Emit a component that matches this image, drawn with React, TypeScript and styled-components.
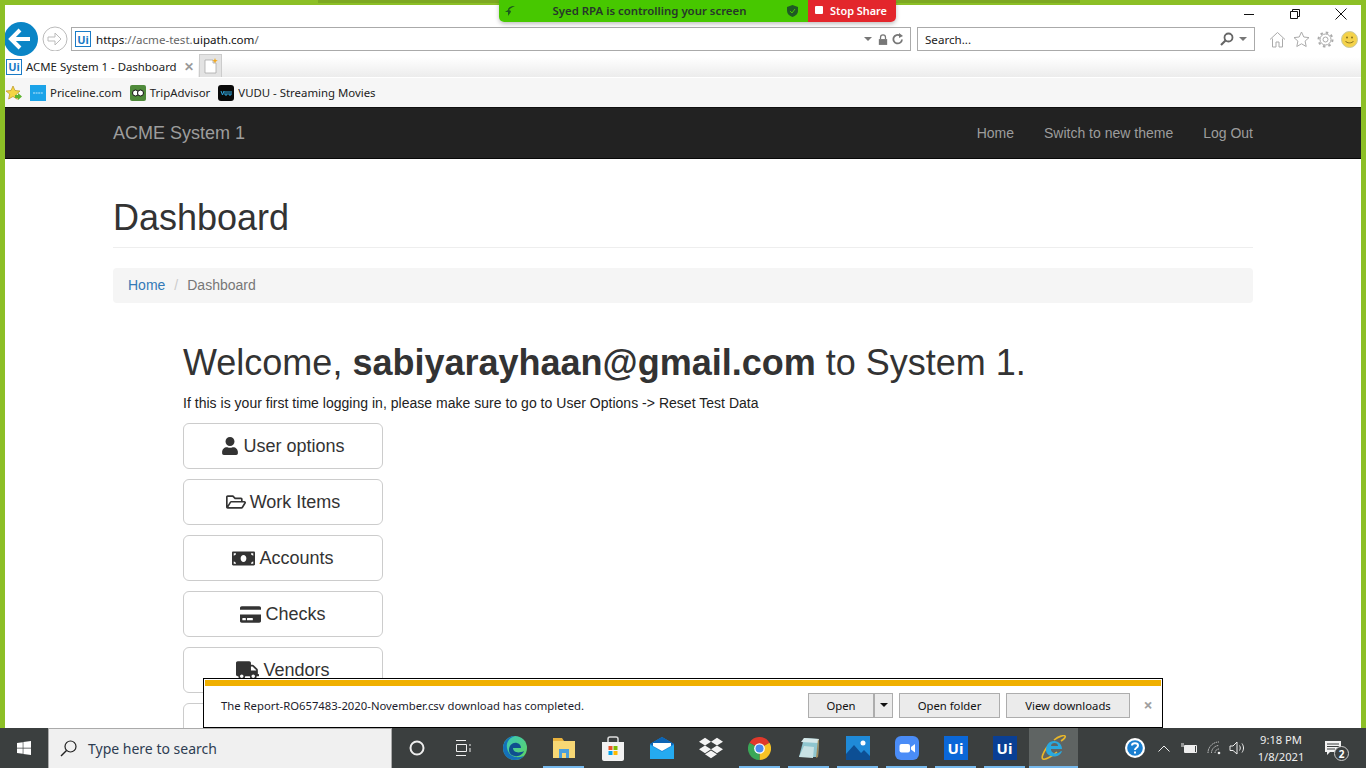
import styled, { createGlobalStyle } from "styled-components";
import {
  FaUser,
  FaRegFolderOpen,
  FaMoneyBill,
  FaCreditCard,
  FaTruck,
  FaDropbox,
  FaWindows,
} from "react-icons/fa";

const GlobalStyle = createGlobalStyle`
  html, body {
    margin: 0;
    padding: 0;
    height: 100%;
    overflow: hidden;
    background: #fff;
  }
  * {
    box-sizing: border-box;
  }
`;

const chromeFont = `"Noto Sans", "Open Sans", sans-serif`;
const pageFont = `"Liberation Sans", Arial, sans-serif`;

const Desktop = styled.div`
  position: relative;
  width: 1366px;
  height: 768px;
  display: flex;
  flex-direction: column;
  overflow: hidden;
  font-family: ${pageFont};
`;

const BrowserWindow = styled.div`
  flex: 1;
  min-height: 0;
  display: flex;
  flex-direction: column;
  overflow: hidden;
  border: 5px solid #8cbf26;
  border-bottom: 0;
  background: #fff;
`;

/* zoom share banner */
const ShareGlow = styled.div`
  position: absolute;
  top: 0;
  left: 318px;
  width: 762px;
  height: 3px;
  background: #7da822;
`;

const ShareBanner = styled.div`
  position: absolute;
  top: 0;
  left: 499px;
  width: 397px;
  height: 22px;
  display: flex;
  border-radius: 0 0 5px 5px;
  overflow: hidden;
  box-shadow: 0 2px 4px rgba(0, 0, 0, 0.25);
  font-family: ${chromeFont};
  font-size: 11.4px;
  font-weight: 600;
`;

const ShareInfo = styled.div`
  width: 309px;
  display: flex;
  align-items: center;
  justify-content: space-between;
  padding: 0 10px 1px 6px;
  background: #47c800;
  color: #26372a;
`;

const ShareLabel = styled.span`
  margin-right: 3px;
`;

const StopShare = styled.div`
  flex: 1;
  display: flex;
  align-items: center;
  gap: 7px;
  padding: 0 0 2px 7px;
  background: #e3262c;
  color: #fff;
  font-size: 10.9px;
`;

const StopMark = styled.span`
  width: 8px;
  height: 8px;
  border-radius: 1px;
  background: #fff;
`;

/* browser chrome */
const TitleRow = styled.div`
  height: 22px;
  flex: none;
  display: flex;
  justify-content: flex-end;
  align-items: center;
  padding: 0 14px 4px 0;
  gap: 34px;
`;

const WindowButton = styled.svg`
  width: 12px;
  height: 12px;
  display: block;
  fill: none;
  stroke: #111;
  stroke-width: 1;
`;

const NavRow = styled.div`
  height: 24px;
  flex: none;
  display: flex;
  align-items: center;
`;

const BackCircle = styled.svg`
  width: 33px;
  height: 34px;
  margin: 0 4px 0 0;
  flex: none;
  position: relative;
  z-index: 1;
`;

const ForwardCircle = styled.svg`
  width: 26px;
  height: 26px;
  margin-right: 3px;
  flex: none;
`;

const AddressBox = styled.div<{ $wide?: boolean }>`
  height: 24px;
  width: ${p => (p.$wide ? 840 : 338)}px;
  margin-right: 6px;
  display: flex;
  align-items: center;
  padding: 0 6px 0 3px;
  gap: 4px;
  flex: none;
  border: 1px solid #aaa;
  background: #fff;
  font-family: ${chromeFont};
  font-size: 11.6px;
  color: #222;
`;

const UiBadge = styled.span<{ $size?: number }>`
  width: ${p => p.$size ?? 16}px;
  height: ${p => p.$size ?? 16}px;
  flex: none;
  display: flex;
  align-items: center;
  justify-content: center;
  border: 1.5px solid #1a7bc6;
  background: #fff;
  color: #1a7bc6;
  font-family: ${chromeFont};
  font-size: 11px;
  font-weight: 700;
  line-height: 1;
`;

const Url = styled.span`
  flex: 1;
  margin-left: 1px;
  white-space: nowrap;
  color: #666;
  & b {
    font-weight: 400;
    color: #111;
  }
`;

const SearchLabel = styled.span`
  flex: 1;
  margin-left: 4px;
`;

const SmallGlyph = styled.svg`
  flex: none;
  display: block;
`;

const ToolIcons = styled.div`
  flex: 1;
  display: flex;
  align-items: center;
  gap: 7px;
  padding-left: 8px;
`;

const TabRow = styled.div`
  height: 26px;
  flex: none;
  display: flex;
  align-items: flex-end;
  background: linear-gradient(#fff 0, #fff 6px, #ececec 100%);
`;

const Tab = styled.div`
  width: 193px;
  height: 23px;
  display: flex;
  align-items: center;
  padding: 2px 1px 0;
  gap: 4px;
  background: #fff;
  font-family: ${chromeFont};
  font-size: 11.4px;
  color: #222;
  white-space: nowrap;
`;

const TabClose = styled.span`
  margin-left: 3px;
  color: #999;
  font-size: 12px;
  font-weight: 700;
`;

const NewTab = styled.div`
  width: 23px;
  height: 23px;
  margin-left: 1px;
  display: flex;
  align-items: center;
  justify-content: center;
  background: #e3e3e3;
  border: 1px solid #ccc;
  border-bottom: 0;
`;

const FavoritesRow = styled.div`
  height: 30px;
  flex: none;
  display: flex;
  align-items: center;
  gap: 8px;
  padding-left: 1px;
  background: #f6f6f6;
  border-top: 1px solid #fff;
  font-family: ${chromeFont};
  font-size: 11.4px;
  color: #222;
`;

const Favorite = styled.span`
  display: flex;
  align-items: center;
  gap: 4px;
  white-space: nowrap;
`;

const FavIcon = styled.span<{ $bg: string; $radius?: number }>`
  width: 16px;
  height: 16px;
  flex: none;
  display: flex;
  align-items: center;
  justify-content: center;
  border-radius: ${p => p.$radius ?? 0}px;
  background: ${p => p.$bg};
`;

/* acme page */
const Navbar = styled.nav`
  height: 52px;
  flex: none;
  padding: 0 108px;
  display: flex;
  align-items: center;
  justify-content: space-between;
  background: #222;
  border-top: 1px solid #111;
  border-bottom: 1px solid #080808;
  color: #9d9d9d;
`;

const Brand = styled.div`
  font-size: 18px;
`;

const NavLinks = styled.div`
  display: flex;
  gap: 30px;
  font-size: 14px;
`;

const Page = styled.main`
  flex: none;
  padding: 39px 108px 0;
  color: #333;
  font-size: 14px;
  line-height: 20px;
`;

const PageHeader = styled.h1`
  margin: 0 0 20px;
  padding-bottom: 9px;
  border-bottom: 1px solid #eee;
  font-size: 36px;
  font-weight: 400;
  line-height: 40px;
`;

const Breadcrumb = styled.div`
  height: 35px;
  padding: 0 15px 1px;
  display: flex;
  align-items: center;
  border-radius: 4px;
  background: #f5f5f5;
  color: #777;
  margin-bottom: 40px;
  & a {
    color: #337ab7;
  }
  & i {
    padding: 0 9px;
    font-style: normal;
    color: #ccc;
  }
`;

const Welcome = styled.div`
  margin-left: 70px;
`;

const WelcomeTitle = styled.h1`
  margin: 0 0 10px;
  font-size: 36px;
  font-weight: 400;
  line-height: 40px;
  & b {
    font-weight: 700;
  }
`;

const Hint = styled.p`
  margin: 0 0 10px;
  color: #222;
  letter-spacing: 0.02px;
`;

const MenuButton = styled.div`
  width: 200px;
  height: 46px;
  margin-bottom: 10px;
  display: flex;
  align-items: center;
  justify-content: center;
  gap: 4px;
  border: 1px solid #ccc;
  border-radius: 6px;
  background: #fff;
  color: #333;
  font-size: 18px;
`;

/* download notification */
const DownloadBar = styled.div`
  position: absolute;
  left: 203px;
  top: 678px;
  width: 960px;
  height: 50px;
  display: flex;
  flex-direction: column;
  padding: 1px;
  border: 1px solid #000;
  background: #fff;
  font-family: ${chromeFont};
  font-size: 11.3px;
  color: #1c1c2c;
`;

const DownloadStrip = styled.div`
  height: 6px;
  flex: none;
  background: #f0b000;
`;

const DownloadRow = styled.div`
  flex: 1;
  display: flex;
  align-items: center;
  padding: 0 5px 2px 16px;
`;

const DownloadText = styled.span`
  flex: 1;
`;

const DownloadButton = styled.div<{ $w: number; $gap?: number }>`
  width: ${p => p.$w}px;
  height: 25px;
  margin-right: ${p => p.$gap ?? 0}px;
  display: flex;
  align-items: center;
  justify-content: center;
  border: 1px solid #adadad;
  background: #ebebeb;
  color: #111;
`;

const Caret = styled.span`
  width: 0;
  height: 0;
  border: 4px solid transparent;
  border-top: 4px solid #111;
  border-bottom: 0;
`;

const DismissX = styled.span`
  margin-left: 10px;
  width: 16px;
  text-align: center;
  color: #a0a0a0;
  font-size: 16px;
  font-weight: 700;
`;

/* taskbar */
const Taskbar = styled.footer`
  height: 40px;
  flex: none;
  display: flex;
  align-items: center;
  background: #3b3f3f;
  font-family: ${chromeFont};
  color: #fff;
`;

const StartButton = styled.div`
  width: 48px;
  height: 40px;
  display: flex;
  align-items: center;
  justify-content: center;
  font-size: 16px;
`;

const SearchBox = styled.div`
  width: 344px;
  height: 40px;
  display: flex;
  align-items: center;
  gap: 11px;
  padding-left: 11px;
  background: #f0f0f0;
  border: 1px solid #aaa;
  border-bottom: 0;
  color: #2e3d52;
  font-size: 14px;
`;

const TaskIcons = styled.div`
  display: flex;
  flex: none;
`;

const TaskCell = styled.div<{ $active?: boolean; $run?: boolean }>`
  position: relative;
  width: 49px;
  height: 40px;
  display: flex;
  align-items: center;
  justify-content: center;
  background: ${p => (p.$active ? "#5f6463" : "transparent")};
  &::after {
    content: "";
    display: ${p => (p.$run ? "block" : "none")};
    position: absolute;
    left: ${p => (p.$active ? 0 : 4)}px;
    right: ${p => (p.$active ? 0 : 4)}px;
    bottom: 0;
    height: 2px;
    background: #76b9ed;
  }
`;

const TaskUi = styled.span<{ $bg: string }>`
  width: 24px;
  height: 24px;
  display: flex;
  align-items: center;
  justify-content: center;
  background: ${p => p.$bg};
  color: #fff;
  font-size: 15px;
  font-weight: 700;
`;

const Tray = styled.div`
  flex: 1;
  display: flex;
  align-items: center;
  justify-content: flex-end;
`;

const TrayCell = styled.div<{ $w: number }>`
  width: ${p => p.$w}px;
  height: 40px;
  display: flex;
  align-items: center;
  justify-content: center;
`;

const Clock = styled.div`
  width: 70px;
  text-align: center;
  font-size: 11.2px;
  line-height: 17px;
  color: #eee;
  margin-right: 9px;
`;

const NotifBadge = styled.span`
  position: absolute;
  right: -8px;
  bottom: -6px;
  width: 15px;
  height: 15px;
  border-radius: 50%;
  border: 1px solid #ccc;
  background: #3b3f3f;
  display: flex;
  align-items: center;
  justify-content: center;
  font-size: 10px;
  font-weight: 700;
`;

const NotifWrap = styled.div`
  position: relative;
  width: 16px;
  height: 14px;
  margin-right: 25px;
`;

const menu = [
  { label: "User options", Icon: FaUser, size: 18 },
  { label: "Work Items", Icon: FaRegFolderOpen, size: 20 },
  { label: "Accounts", Icon: FaMoneyBill, size: 23 },
  { label: "Checks", Icon: FaCreditCard, size: 21 },
  { label: "Vendors", Icon: FaTruck, size: 23 },
  { label: "", Icon: null, size: 0 },
];

const Edge = () => (
  <svg width="26" height="26" viewBox="0 0 26 26">
    <defs>
      <linearGradient id="edgeA" x1="0" y1="0" x2="1" y2="1">
        <stop offset="0" stopColor="#38c7c0" />
        <stop offset="1" stopColor="#5fd45f" />
      </linearGradient>
    </defs>
    <circle cx="13" cy="13" r="12" fill="url(#edgeA)" />
    <path d="M1 13C1 6 7 1 13 1c-6 2-9 6-8 12 1 6 6 10 13 9l4-1c-3 3-6 4-9 4C6 25 1 20 1 13z" fill="#1570b8" />
    <path d="M7 15c0-5 4-8 8-7 3 .7 4 3 4 5H11c0 4 5 6 11 3-1 3-5 6-9 5-4-.6-6-3-6-6z" fill="#0f4f8f" />
  </svg>
);

const Explorer = () => (
  <svg width="24" height="22" viewBox="0 0 24 22">
    <path d="M1 1h9l2 3h11v17H1z" fill="#e9b23d" />
    <rect x="1" y="4" width="22" height="17" fill="#f7d774" />
    <rect x="7" y="12" width="10" height="9" fill="#4a9fdc" />
    <rect x="10" y="16" width="4" height="5" fill="#f7d774" />
  </svg>
);

const Store = () => (
  <svg width="24" height="25" viewBox="0 0 24 25">
    <path d="M7 7V3c0-1 1-2 2-2h6c1 0 2 1 2 2v4" fill="none" stroke="#ddd" strokeWidth="1.5" />
    <path d="M1 6h22v17c0 1-1 2-2 2H3c-1 0-2-1-2-2z" fill="#f2f2f2" />
    <rect x="7.5" y="10" width="4" height="4" fill="#e8532a" />
    <rect x="12.5" y="10" width="4" height="4" fill="#7fba00" />
    <rect x="7.5" y="15" width="4" height="4" fill="#00a4ef" />
    <rect x="12.5" y="15" width="4" height="4" fill="#ffb900" />
  </svg>
);

const Mail = () => (
  <svg width="24" height="22" viewBox="0 0 24 22">
    <path d="M0 7 12 0l12 7v15H0z" fill="#1b8fe0" />
    <path d="M0 7 12 0l12 7-12 7z" fill="#0c64b5" />
    <path d="M3 6h18v3l-9 5-9-5z" fill="#fff" />
    <path d="M0 8l12 7 12-7v14H0z" fill="#25aaf0" />
  </svg>
);

const Chrome = () => (
  <svg width="23" height="23" viewBox="0 0 24 24">
    <path d="M12 12 1.6 6A12 12 0 0 1 22.4 6z" fill="#e0392c" />
    <path d="M12 12 22.4 6A12 12 0 0 1 12 24z" fill="#f7c325" />
    <path d="M12 12V24A12 12 0 0 1 1.6 6z" fill="#3aa757" />
    <circle cx="12" cy="12" r="5.6" fill="#fff" />
    <circle cx="12" cy="12" r="4.2" fill="#4a8af0" />
  </svg>
);

const Notepad = () => (
  <svg width="24" height="24" viewBox="0 0 24 24">
    <path d="M7 2l15 1-1 18H2z" fill="#8fc6cf" />
    <path d="M7 2l15 1-1 4-17-1z" fill="#d7e9ea" />
    <path d="M21 3l1 2-1 16-2 1z" fill="#a08a5a" />
    <path d="M2 21l5-11 10 1-1 11z" fill="#c8e2e4" />
  </svg>
);

const Photos = () => (
  <svg width="24" height="24" viewBox="0 0 24 24">
    <rect width="24" height="24" fill="#1f8ad8" />
    <circle cx="17" cy="7" r="2.5" fill="#fff" />
    <path d="M0 18l8-9 7 8 3-3 6 6v4H0z" fill="#0d4f94" />
  </svg>
);

const Zoom = () => (
  <svg width="24" height="24" viewBox="0 0 24 24">
    <rect width="24" height="24" rx="6" fill="#4a8cf7" />
    <rect x="4.5" y="8" width="10.5" height="8.5" rx="2" fill="#fff" />
    <path d="M16 11l4-3v8.500l-4-3z" fill="#fff" />
  </svg>
);

const Ie = () => (
  <svg width="26" height="26" viewBox="0 0 26 26">
    <path d="M6 12c-4 6-6 11-4 12 2 1 8-2 14-7M20 6c3-2 5-4 4-5-1-1-6 0-11 4" fill="none" stroke="#e8b62a" strokeWidth="1.6" />
    <path d="M5 15c0-5 3-9 8-9s8 4 8 8H10c0 5 7 6 10 2l1 .4c-2 4-5 5-8 5-5 0-8-3-8-6.400zM10 11h7c0-2-1.500-3-3.500-3S10 9 10 11z" fill="#2aa8de" />
  </svg>
);

const App = () => {
  return (
    <Desktop>
      <GlobalStyle />
      <BrowserWindow>
        <TitleRow>
          <WindowButton viewBox="0 0 12 12">
            <path d="M1 6.500h10" />
          </WindowButton>
          <WindowButton viewBox="0 0 12 12">
            <path d="M1.500 3.500h7v7h-7zM3.500 3.500v-2h7v7h-2" />
          </WindowButton>
          <WindowButton viewBox="0 0 12 12">
            <path d="M.5.500l11 11M11.500.500l-11 11" />
          </WindowButton>
        </TitleRow>

        <NavRow>
          <BackCircle viewBox="0 0 33 34">
            <circle cx="16" cy="17" r="17" fill="#0a85c6" />
            <path d="M6 17h19M15 8l-9 9 9 9" fill="none" stroke="#fff" strokeWidth="4" />
          </BackCircle>
          <ForwardCircle viewBox="0 0 26 26">
            <circle cx="13" cy="13" r="12" fill="#fff" stroke="#bbb" />
            <path d="M6 11h7V7l6 6-6 6v-4H6z" fill="none" stroke="#bbb" />
          </ForwardCircle>
          <AddressBox $wide>
            <UiBadge>Ui</UiBadge>
            <Url>
              <b>https</b>://acme-test.<b>uipath.com</b>/
            </Url>
            <SmallGlyph width="8" height="5" viewBox="0 0 8 5" style={{ marginRight: 2 }}>
              <path d="M0 0h8L4 4z" fill="#777" />
            </SmallGlyph>
            <SmallGlyph width="10" height="13" viewBox="0 0 12 13">
              <path d="M3 6V4a3 3 0 0 1 6 0v2" fill="none" stroke="#777" strokeWidth="1.500" />
              <rect x="1" y="6" width="10" height="7" fill="#777" />
            </SmallGlyph>
            <SmallGlyph width="12" height="12" viewBox="0 0 12 12">
              <path d="M10 6.500A4.300 4.300 0 1 1 8 2.500" fill="none" stroke="#777" strokeWidth="1.800" />
              <path d="M7 0l4 3-4 2z" fill="#777" />
            </SmallGlyph>
          </AddressBox>
          <AddressBox>
            <SearchLabel>Search...</SearchLabel>
            <SmallGlyph width="14" height="14" viewBox="0 0 14 14">
              <circle cx="8.500" cy="5.500" r="4" fill="none" stroke="#666" strokeWidth="1.800" />
              <path d="M5.500 8.500 1 13" stroke="#666" strokeWidth="2.200" />
            </SmallGlyph>
            <SmallGlyph width="8" height="5" viewBox="0 0 8 5" style={{ margin: "0 1px" }}>
              <path d="M0 0h8L4 4z" fill="#777" />
            </SmallGlyph>
          </AddressBox>
          <ToolIcons>
            <SmallGlyph width="17" height="17" viewBox="0 0 17 17">
              <path d="M1 8.500 8.500 1.500 16 8.500M3.500 7.500V16h3.500v-5h3v5h3.500V7.500" fill="none" stroke="#aaa" />
            </SmallGlyph>
            <SmallGlyph width="17" height="17" viewBox="0 0 17 17">
              <path d="M8.500 1l2.300 5 5.200.6-3.900 3.500 1.100 5.400-4.700-2.700-4.700 2.700 1.100-5.400L1 6.600 6.200 6z" fill="none" stroke="#aaa" />
            </SmallGlyph>
            <SmallGlyph width="17" height="17" viewBox="0 0 17 17">
              <circle cx="8.500" cy="8.500" r="2.500" fill="none" stroke="#aaa" />
              <circle cx="8.500" cy="8.500" r="5.500" fill="none" stroke="#aaa" />
              <circle cx="8.500" cy="8.500" r="7" fill="none" stroke="#aaa" strokeWidth="2" strokeDasharray="2.500 3" />
            </SmallGlyph>
            <SmallGlyph width="17" height="17" viewBox="0 0 17 17">
              <circle cx="8.500" cy="8.500" r="8" fill="#f4d24a" stroke="#c9c9a0" />
              <circle cx="6" cy="6.500" r="1" fill="#8a7420" />
              <circle cx="11" cy="6.500" r="1" fill="#8a7420" />
              <path d="M4.500 10c1 2.500 7 2.500 8 0" fill="none" stroke="#8a7420" />
            </SmallGlyph>
          </ToolIcons>
        </NavRow>

        <TabRow>
          <Tab>
            <UiBadge>Ui</UiBadge>
            ACME System 1 - Dashboard
            <TabClose>✕</TabClose>
          </Tab>
          <NewTab>
            <SmallGlyph width="14" height="16" viewBox="0 0 14 16">
              <path d="M1 2h8v3h3v10H1z" fill="#fff" stroke="#aaa" strokeWidth=".8" />
              <path d="M11 0l.8 2 2 .6-2 .8L11 5.500l-.8-2-2-.8 2-.6z" fill="#f2a81d" />
            </SmallGlyph>
          </NewTab>
        </TabRow>

        <FavoritesRow>
          <SmallGlyph width="16" height="16" viewBox="0 0 16 16">
            <path d="M7 1l2 4.500 5 .5-3.700 3.300 1.100 5L7 11.500 2.600 14l1.100-5L0 6l5-.5z" fill="#f5d545" stroke="#b8951e" strokeWidth=".7" />
            <path d="M9 10h3V8l4 3.500-4 3.500v-2H9z" fill="#5fb52f" />
          </SmallGlyph>
          <Favorite>
            <FavIcon $bg="#1ba3e8">
              <SmallGlyph width="10" height="2" viewBox="0 0 10 2">
                <path d="M0 1h10" stroke="#bfe6fa" strokeDasharray="2 .6" />
              </SmallGlyph>
            </FavIcon>
            Priceline.com
          </Favorite>
          <Favorite>
            <FavIcon $bg="#4f8a3a" $radius={2}>
              <SmallGlyph width="12" height="8" viewBox="0 0 12 8">
                <circle cx="3.500" cy="4" r="3" fill="#fff" stroke="#111" />
                <circle cx="8.500" cy="4" r="3" fill="#fff" stroke="#111" />
              </SmallGlyph>
            </FavIcon>
            TripAdvisor
          </Favorite>
          <Favorite>
            <FavIcon $bg="#0a0a0a" $radius={3}>
              <SmallGlyph width="12" height="6" viewBox="0 0 12 6">
                <path d="M1 1l1.500 4L4 1M5 1v4h2V1M9 1v4h2V1" fill="none" stroke="#2fa8e0" />
              </SmallGlyph>
            </FavIcon>
            VUDU - Streaming Movies
          </Favorite>
        </FavoritesRow>

        <Navbar>
          <Brand>ACME System 1</Brand>
          <NavLinks>
            <span>Home</span>
            <span>Switch to new theme</span>
            <span>Log Out</span>
          </NavLinks>
        </Navbar>

        <Page>
          <PageHeader>Dashboard</PageHeader>
          <Breadcrumb>
            <a>Home</a>
            <i>/</i>
            Dashboard
          </Breadcrumb>
          <Welcome>
            <WelcomeTitle>
              Welcome, <b>sabiyarayhaan@gmail.com</b> to System 1.
            </WelcomeTitle>
            <Hint>If this is your first time logging in, please make sure to go to User Options -&gt; Reset Test Data</Hint>
            {menu.map(({ label, Icon, size }) => (
              <MenuButton key={label}>
                {Icon && <Icon size={size} />}
                {label}
              </MenuButton>
            ))}
          </Welcome>
        </Page>
      </BrowserWindow>

      <Taskbar>
        <StartButton>
          <FaWindows />
        </StartButton>
        <SearchBox>
          <SmallGlyph width="17" height="17" viewBox="0 0 17 17">
            <circle cx="10.500" cy="6.500" r="5.500" fill="none" stroke="#222" strokeWidth="1.200" />
            <path d="M6.500 10.500 1 16" stroke="#222" strokeWidth="1.400" />
          </SmallGlyph>
          Type here to search
        </SearchBox>
        <TaskIcons>
          <TaskCell>
            <SmallGlyph width="16" height="16" viewBox="0 0 16 16">
              <circle cx="8" cy="8" r="6.500" fill="none" stroke="#eee" strokeWidth="2" />
            </SmallGlyph>
          </TaskCell>
          <TaskCell>
            <SmallGlyph width="18" height="16" viewBox="0 0 18 16" style={{ marginRight: 3 }}>
              <path d="M1 .5h10M1 15.500h10M1.500 4.500h10v7h-10zM15 4v2M15 8v4" fill="none" stroke="#eee" />
            </SmallGlyph>
          </TaskCell>
          <TaskCell><Edge /></TaskCell>
          <TaskCell $run><Explorer /></TaskCell>
          <TaskCell><Store /></TaskCell>
          <TaskCell><Mail /></TaskCell>
          <TaskCell>
            <FaDropbox size={24} color="#f4f4f4" />
          </TaskCell>
          <TaskCell $run><Chrome /></TaskCell>
          <TaskCell $run><Notepad /></TaskCell>
          <TaskCell $run><Photos /></TaskCell>
          <TaskCell $run><Zoom /></TaskCell>
          <TaskCell $run><TaskUi $bg="#0a67d8">Ui</TaskUi></TaskCell>
          <TaskCell $run><TaskUi $bg="#0a3f94">Ui</TaskUi></TaskCell>
          <TaskCell $run $active><Ie /></TaskCell>
        </TaskIcons>
        <Tray>
          <TrayCell $w={30}>
            <SmallGlyph width="22" height="22" viewBox="0 0 22 22">
              <circle cx="11" cy="11" r="10" fill="#fff" />
              <circle cx="11" cy="11" r="7.800" fill="#1a7fd0" />
              <path d="M8 8.500C8 5.500 14 5.500 14 8.500 14 11 11 10.500 11 13M11 14.500v2" fill="none" stroke="#fff" strokeWidth="2" />
            </SmallGlyph>
          </TrayCell>
          <TrayCell $w={28}>
            <SmallGlyph width="12" height="7" viewBox="0 0 12 7">
              <path d="M.5 6.500 6 1l5.500 5.500" fill="none" stroke="#eee" />
            </SmallGlyph>
          </TrayCell>
          <TrayCell $w={22}>
            <SmallGlyph width="16" height="11" viewBox="0 0 16 11">
              <path d="M3.500 2.500h12v7h-12zM0 1h3M0 3h3" fill="none" stroke="#eee" />
              <rect x="3" y="3" width="11" height="6" fill="#eee" />
            </SmallGlyph>
          </TrayCell>
          <TrayCell $w={28}>
            <SmallGlyph width="14" height="14" viewBox="0 0 14 14">
              <path d="M1 12A11 11 0 0 1 12 1M4.500 12A7.500 7.500 0 0 1 12 4.500M8 12A4 4 0 0 1 12 8" fill="none" stroke="#ccc" strokeDasharray="1.500 .8" />
              <circle cx="12" cy="12" r="1.300" fill="#eee" />
            </SmallGlyph>
          </TrayCell>
          <TrayCell $w={18}>
            <SmallGlyph width="17" height="14" viewBox="0 0 17 14">
              <path d="M1 5h3l4-4v12L4 9.500H1zM10.500 4.500c1 1.500 1 3.500 0 5M13 2.500c2 3 2 6 0 9" fill="none" stroke="#eee" />
            </SmallGlyph>
          </TrayCell>
          <Clock>
            9:18 PM
            <br />
            1/8/2021
          </Clock>
          <NotifWrap>
            <SmallGlyph width="16" height="14" viewBox="0 0 16 14">
              <path d="M0 0h16v11H5l-3 3v-3H0z" fill="#f2f2f2" />
              <path d="M2 3h12M2 5.500h12M2 8h8" stroke="#3b3f3f" />
            </SmallGlyph>
            <NotifBadge>2</NotifBadge>
          </NotifWrap>
        </Tray>
      </Taskbar>

      <ShareGlow />
      <ShareBanner>
        <ShareInfo>
          <SmallGlyph width="10" height="10" viewBox="0 0 10 10">
            <path d="M10 0C5 0 3 2 3 4L0 6h3v4c1-2 3-3 3-5L4 4c1-2 4-3 6-4z" fill="#1c5a1c" />
          </SmallGlyph>
          <ShareLabel>Syed RPA is controlling your screen</ShareLabel>
          <SmallGlyph width="11" height="12" viewBox="0 0 11 12">
            <path d="M5.500 0 11 2v4c0 3-2.500 5-5.500 6C2.500 11 0 9 0 6V2z" fill="#1f5a24" />
            <path d="M3 6l2 2 3-4" fill="none" stroke="#47c800" />
          </SmallGlyph>
        </ShareInfo>
        <StopShare>
          <StopMark />
          Stop Share
        </StopShare>
      </ShareBanner>

      <DownloadBar>
        <DownloadStrip />
        <DownloadRow>
          <DownloadText>The Report-RO657483-2020-November.csv download has completed.</DownloadText>
          <DownloadButton $w={66}>Open</DownloadButton>
          <DownloadButton $w={19} $gap={6}>
            <Caret />
          </DownloadButton>
          <DownloadButton $w={101} $gap={6}>Open folder</DownloadButton>
          <DownloadButton $w={124}>View downloads</DownloadButton>
          <DismissX>×</DismissX>
        </DownloadRow>
      </DownloadBar>
    </Desktop>
  );
};

export default App;
